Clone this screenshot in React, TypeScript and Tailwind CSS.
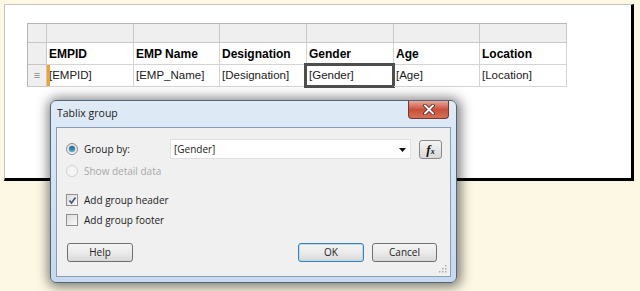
import React from "react";

const cols = ["EMPID", "EMP Name", "Designation", "Gender", "Age", "Location"];
const fields = ["[EMPID]", "[EMP_Name]", "[Designation]", "[Gender]", "[Age]", "[Location]"];
const widths = ["w-[87px]", "w-[86px]", "w-[87px]", "w-[87px]", "w-[86px]", "w-[87px]"];

const Radio = ({ checked, disabled }: { checked?: boolean; disabled?: boolean }) => (
  <span
    className={`flex items-center justify-center w-[12px] h-[12px] rounded-full border ${
      disabled ? "border-[#cfcfcf] bg-[#f4f4f4]" : "border-[#8a8a8a] bg-linear-to-b from-[#e4e4e4] to-[#fbfbfb]"
    }`}
  >
    {checked && (
      <span className="w-[6px] h-[6px] rounded-full bg-linear-to-b from-[#1f5d8c] to-[#4fb0d8] shadow-[0_0_1px_#0b3a5c]" />
    )}
  </span>
);

const Check = ({ checked }: { checked?: boolean }) => (
  <span className="flex items-center justify-center w-[12px] h-[12px] border border-[#8e8f8f] bg-linear-to-br from-[#dcdcdc] to-[#fafafa]">
    {checked && (
      <svg width="9" height="9" viewBox="0 0 9 9">
        <path d="M1.5 4.5 L3.5 7 L7.5 1.5" fill="none" stroke="#3c4f7a" strokeWidth="1.6" />
      </svg>
    )}
  </span>
);

const Button = ({ label, primary, className }: { label: string; primary?: boolean; className?: string }) => (
  <div
    className={`flex items-center justify-center h-[19px] rounded-[3px] border text-[10px] text-[#222] bg-linear-to-b from-[#f4f4f4] via-[#ebebeb] to-[#d8d8d8] ${
      primary ? "border-[#3c7fb1] shadow-[inset_0_0_0_1px_#b6dcf2]" : "border-[#707070]"
    } ${className ?? ""}`}
  >
    {label}
  </div>
);

export default function App() {
  return (
    <div className="relative w-[640px] h-[291px] overflow-hidden bg-[#fcf8e4] font-['Liberation_Sans',Arial,sans-serif]">
      {/* Report body */}
      <div className="pl-[4px] pt-[4px]">
        <div className="w-[630px] h-[177px] bg-white border-l border-t border-[#c4c4c4] border-r-[3px] border-b-[3px] border-r-black border-b-black pl-[22px] pt-[18px]">
          <div className="flex flex-col w-max border-l border-t border-[#b4b4b4]">
            {/* Gray handle row */}
            <div className="flex h-[19px]">
              <div className="w-[19px] bg-[#efefef] border-r border-b border-[#c8c8c8]" />
              {widths.map((w, i) => (
                <div key={i} className={`${w} bg-[#efefef] border-r border-b border-[#c8c8c8]`} />
              ))}
            </div>
            {/* Header row */}
            <div className="flex h-[22px]">
              <div className="w-[19px] bg-[#efefef] border-r border-b border-[#c8c8c8]" />
              {cols.map((c, i) => (
                <div
                  key={c}
                  className={`${widths[i]} flex items-center pl-[2px] border-r border-b border-[#d4d4d4] text-[12px] font-bold text-black`}
                >
                  {c}
                </div>
              ))}
            </div>
            {/* Detail row */}
            <div className="flex h-[22px]">
              <div className="w-[19px] flex items-center justify-center bg-[#efefef] border-r border-b border-[#c8c8c8] text-[11px] text-[#8a8a8a]">
                ≡
              </div>
              {fields.map((f, i) => (
                <div
                  key={f}
                  className={`${widths[i]} relative flex items-center pl-[2px] border-r border-b border-[#d4d4d4] text-[11.5px] text-[#1a1a1a]`}
                >
                  {i === 0 && <span className="absolute left-0 top-0 bottom-0 w-[3px] bg-[#f0a22e]" />}
                  {i === 3 && (
                    <span className="absolute left-[-3px] top-[-2px] right-[-2px] bottom-[-2px] border-[3px] border-[#4e4e4e]" />
                  )}
                  {f}
                </div>
              ))}
            </div>
          </div>
        </div>
      </div>

      {/* Tablix group dialog */}
      <div className="absolute left-[50px] top-[100px] w-[407px] h-[183px] flex flex-col rounded-[6px] border border-[#51667d] bg-linear-to-b from-[#dfeaf6] to-[#c6d9ee] shadow-[1px_1px_12px_3px_rgba(0,0,0,0.5)] font-['Open_Sans',sans-serif]">
        <div className="relative h-[26px] flex items-center pl-[6px] text-[10.5px] text-[#1b1b1b]">
          Tablix group
          <div className="absolute right-[7px] top-0 w-[41px] h-[18px] rounded-b-[4px] border border-t-0 border-[#6e3a34] bg-linear-to-b from-[#eaa898] via-[#c8503c] to-[#d66f55] flex items-center justify-center">
            <svg width="12" height="11" viewBox="0 0 12 11">
              <path d="M2 1.5 L10 9.5 M10 1.5 L2 9.5" stroke="#5a2019" strokeWidth="3.6" strokeLinecap="round" />
              <path d="M2 1.5 L10 9.5 M10 1.5 L2 9.5" stroke="#ffffff" strokeWidth="2" strokeLinecap="round" />
            </svg>
          </div>
        </div>
        <div className="relative mx-[5px] mb-[5px] flex-1 border border-[#8b9db2] bg-[#f0f0f0] pl-[9px] pr-[6px] pt-[11px] text-[10px] text-[#222]">
          {/* Group by */}
          <div className="flex items-center h-[20px]">
            <div className="flex items-center w-[104px] gap-[6px]">
              <Radio checked />
              <span>Group by:</span>
            </div>
            <div className="relative flex items-center w-[241px] h-[20px] bg-white border border-[#e0e0e0] pl-[3px] text-[10px]">
              [Gender]
              <svg className="absolute right-[4px] top-[8px]" width="7" height="4" viewBox="0 0 7 4">
                <path d="M0 0 H7 L3.5 4 Z" fill="#111" />
              </svg>
            </div>
            <div className="ml-[8px] flex items-center justify-center w-[23px] h-[19px] rounded-[3px] border border-[#8a8a8a] bg-linear-to-b from-[#f4f4f4] to-[#d9d9d9] font-['Liberation_Serif',serif] italic font-bold text-[13px] leading-none text-[#111]">
              f<span className="text-[8px] mt-[5px]">x</span>
            </div>
          </div>
          {/* Show detail data */}
          <div className="flex items-center h-[20px] mt-[2px] gap-[6px] text-[#a8a8a8]">
            <Radio disabled />
            <span>Show detail data</span>
          </div>
          {/* Checkboxes */}
          <div className="flex items-center h-[20px] mt-[9px] gap-[6px]">
            <Check checked />
            <span>Add group header</span>
          </div>
          <div className="flex items-center h-[20px] gap-[6px]">
            <Check />
            <span>Add group footer</span>
          </div>
          {/* Buttons */}
          <div className="flex items-center mt-[13px] pl-[1px] pr-[7px]">
            <Button label="Help" className="w-[66px]" />
            <div className="flex-1" />
            <Button label="OK" primary className="w-[66px]" />
            <Button label="Cancel" className="w-[65px] ml-[8px]" />
          </div>
          <svg className="absolute right-[3px] bottom-[3px]" width="8" height="8" viewBox="0 0 8 8">
            <rect x="6" y="0" width="1.5" height="1.5" fill="#a9a9a9" />
            <rect x="3" y="3" width="1.5" height="1.5" fill="#a9a9a9" />
            <rect x="6" y="3" width="1.5" height="1.5" fill="#a9a9a9" />
            <rect x="0" y="6" width="1.5" height="1.5" fill="#a9a9a9" />
            <rect x="3" y="6" width="1.5" height="1.5" fill="#a9a9a9" />
            <rect x="6" y="6" width="1.5" height="1.5" fill="#a9a9a9" />
          </svg>
        </div>
      </div>
    </div>
  );
}
